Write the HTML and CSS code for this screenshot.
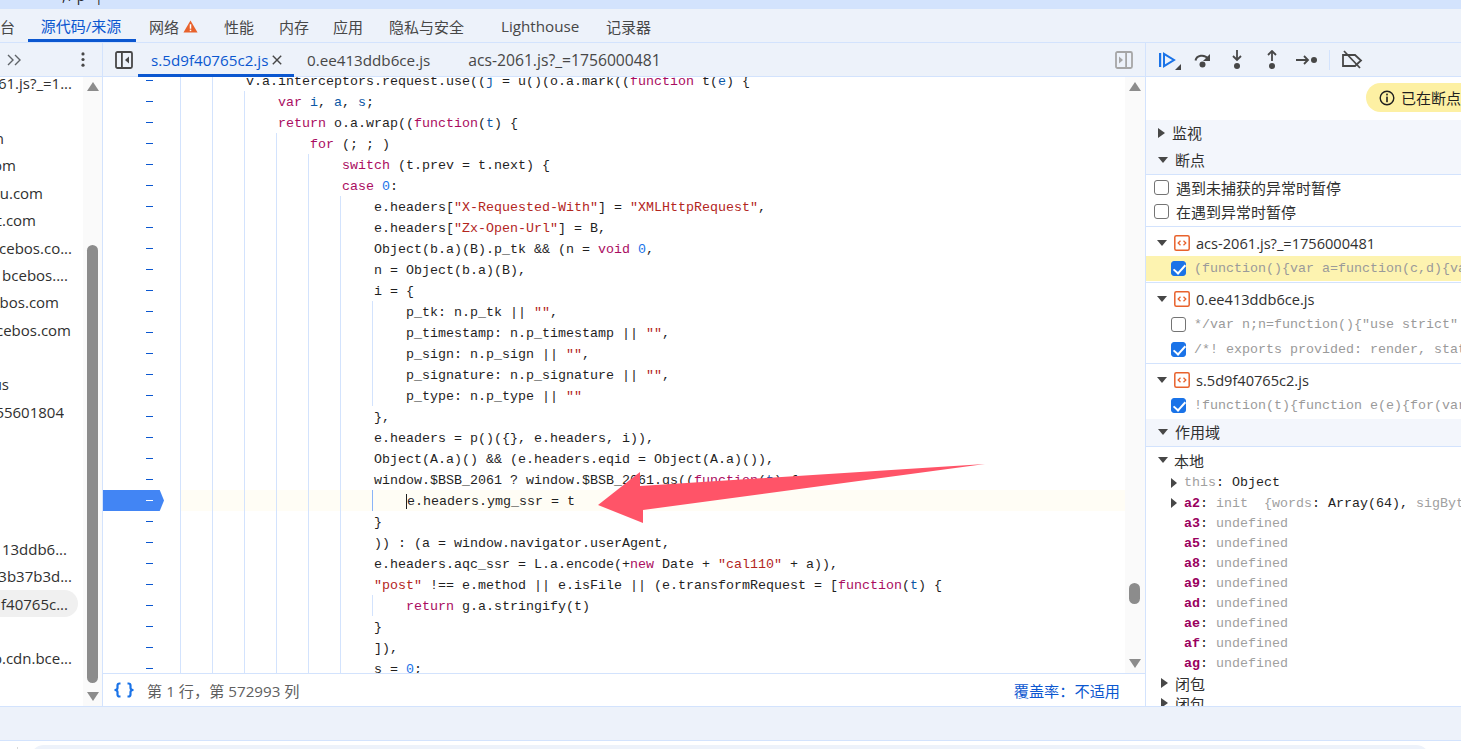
FILE: index.html
```html
<!DOCTYPE html>
<html lang="zh-CN">
<head>
<meta charset="utf-8">
<title>DevTools</title>
<link rel="stylesheet" href="styles.css">
</head>
<body>
<div class="app">
  <div class="topstrip"><span class="frag">,/p |</span></div>
  <nav class="maintabs">
    <span class="mt mt-cut">台</span>
    <span class="mt mt-active">源代码/来源</span>
    <span class="mt mt-net">网络<svg class="warn" viewBox="0 0 16 14"><path d="M8 .5 15.6 13.5H.4z" fill="#e8622c"/><rect x="7.2" y="4.6" width="1.6" height="4.8" fill="#fff"/><rect x="7.2" y="10.4" width="1.6" height="1.6" fill="#fff"/></svg></span>
    <span class="mt mt-perf">性能</span>
    <span class="mt mt-mem">内存</span>
    <span class="mt mt-app">应用</span>
    <span class="mt mt-sec">隐私与安全</span>
    <span class="mt mt-lh">Lighthouse</span>
    <span class="mt mt-rec">记录器</span>
  </nav>
  <div class="workspace">
    <aside class="navpane">
      <div class="navbar">
        <svg class="i-more" viewBox="0 0 16 12"><path d="M1 1l5 5-5 5M8 1l5 5-5 5" fill="none" stroke="#5f6368" stroke-width="1.4"/></svg>
        <svg class="i-kebab" viewBox="0 0 4 16"><circle cx="2" cy="2" r="1.7" fill="#474747"/><circle cx="2" cy="8" r="1.7" fill="#474747"/><circle cx="2" cy="14" r="1.7" fill="#474747"/></svg>
      </div>
      <div class="navbody">
        <div class="tree">
          <div class="row"><span style="width:72px">61.js?_=1...</span></div>
          <div class="row"></div>
          <div class="row"><span style="width:4px">n</span></div>
          <div class="row"><span style="width:16px">om</span></div>
          <div class="row"><span style="width:43px">u.com</span></div>
          <div class="row"><span style="width:36px">t.com</span></div>
          <div class="row"><span style="width:72px">cebos.co...</span></div>
          <div class="row"><span style="width:68px">bcebos....</span></div>
          <div class="row"><span style="width:59px">bos.com</span></div>
          <div class="row"><span style="width:71px">cebos.com</span></div>
          <div class="row"></div>
          <div class="row"><span style="width:9px">us</span></div>
          <div class="row"><span style="width:64px">55601804</span></div>
          <div class="row"></div>
          <div class="row"></div>
          <div class="row"></div>
          <div class="row"></div>
          <div class="row"><span style="width:67px">13ddb6...</span></div>
          <div class="row"><span style="width:72px">3b37b3d...</span></div>
          <div class="row row-sel"><span style="width:68px">f40765c...</span></div>
          <div class="row"></div>
          <div class="row"><span style="width:72px">o.cdn.bce...</span></div>
        </div>
        <div class="vscroll nav-scroll">
          <i class="arr-up"></i>
          <i class="thumb nav-thumb"></i>
          <i class="arr-down"></i>
        </div>
      </div>
    </aside>
    <main class="editor">
      <div class="edbar">
        <svg class="i-side" viewBox="0 0 18 18"><rect x="1" y="1" width="16" height="16" rx="1.5" fill="none" stroke="#474747" stroke-width="1.8"/><rect x="6" y="1" width="1.8" height="16" fill="#474747"/><path d="M14 5.500v7L10 9z" fill="#474747"/></svg>
        <span class="ft ft-active">s.5d9f40765c2.js<svg class="i-x" viewBox="0 0 10 10"><path d="M.8.8l8.4 8.4M9.2.8.8 9.2" stroke="#474747" stroke-width="1.4"/></svg></span>
        <span class="ft ft-2">0.ee413ddb6ce.js</span>
        <span class="ft ft-3">acs-2061.js?_=1756000481</span>
        <svg class="i-side2" viewBox="0 0 18 18"><rect x="1" y="1" width="16" height="16" rx="1.5" fill="none" stroke="#a6a6a6" stroke-width="1.8"/><rect x="10.2" y="1" width="1.8" height="16" fill="#a6a6a6"/><path d="M4 5.500v7L8 9z" fill="#a6a6a6"/></svg>
      </div>
      <div class="edbody">
        <div class="code" id="code"></div>
        <div class="vscroll ed-scroll">
          <i class="arr-up"></i>
          <i class="thumb ed-thumb"></i>
          <i class="arr-down"></i>
        </div>
        <svg class="redarrow" viewBox="0 0 420 70"><path d="M3 44 45 11 45 25 390 3 48 49 48 62z" fill="#ff5468"/></svg>
      </div>
      <div class="status">
        <svg class="i-braces" viewBox="0 0 22 16"><path d="M7.500 1.500H6.500C5 1.500 4.500 2.200 4.500 3.500V6C4.500 7 3.500 8 1.500 8 3.500 8 4.500 9 4.500 10V12.500C4.500 13.800 5 14.500 6.500 14.500H7.500M14.500 1.500H15.500C17 1.500 17.500 2.200 17.500 3.500V6C17.500 7 18.500 8 20.500 8 18.500 8 17.500 9 17.500 10V12.500C17.500 13.800 17 14.500 15.500 14.500H14.500" fill="none" stroke="#1a73e8" stroke-width="2.200"/></svg>
        <span class="pos">第 1 行，第 572993 列</span>
        <span class="cov">覆盖率：不适用</span>
      </div>
    </main>
    <aside class="debug">
      <div class="dbar">
        <svg class="di i-resume" viewBox="0 0 24 20"><rect x="2" y="3" width="2.200" height="14" fill="#1a73e8"/><path d="M7 3.800 17 10 7 16.200z" fill="none" stroke="#1a73e8" stroke-width="2"/><path d="M24 14v6h-6z" fill="#474747"/></svg>
        <svg class="di i-over" viewBox="0 0 20 20"><path d="M2.500 10.500C3.500 5.500 11 3.500 15.500 9" fill="none" stroke="#474747" stroke-width="2"/><path d="M17 4v7h-7z" fill="#474747"/><circle cx="9.500" cy="14.500" r="3" fill="#474747"/></svg>
        <svg class="di i-into" viewBox="0 0 20 20"><path d="M10 0v9" stroke="#474747" stroke-width="1.800"/><path d="M6 6l4 4 4-4" fill="none" stroke="#474747" stroke-width="1.800"/><circle cx="10" cy="16" r="3" fill="#474747"/></svg>
        <svg class="di i-out" viewBox="0 0 20 20"><path d="M10 11V1" stroke="#474747" stroke-width="1.800"/><path d="M6 5l4-4 4 4" fill="none" stroke="#474747" stroke-width="1.800"/><circle cx="10" cy="16" r="3" fill="#474747"/></svg>
        <svg class="di i-step" viewBox="0 0 24 20"><path d="M1 10h12M9 6l4 4-4 4" fill="none" stroke="#474747" stroke-width="1.800"/><circle cx="19" cy="10" r="3" fill="#474747"/></svg>
        <span class="dsep"></span>
        <svg class="di i-deact" viewBox="0 0 22 20"><path d="M2 5h12l6 5.500-6 5.500H2z" fill="none" stroke="#474747" stroke-width="1.800"/><path d="M3 1l16 17" stroke="#474747" stroke-width="1.800"/></svg>
      </div>
      <div class="dbody">
        <div class="pillrow"><div class="pill"><svg class="i-info" viewBox="0 0 16 16"><circle cx="8" cy="8" r="6.800" fill="none" stroke="#1f1f1f" stroke-width="1.400"/><rect x="7.200" y="3.600" width="1.600" height="1.800" fill="#1f1f1f"/><rect x="7.200" y="6.600" width="1.600" height="5.600" fill="#1f1f1f"/></svg>已在断点处暂停</div></div>
        <div class="shead"><i class="tri-r"></i>监视</div>
        <div class="shead shead-line"><i class="tri-d"></i>断点</div>
        <div class="checks">
          <label class="chk"><i class="box"></i>遇到未捕获的异常时暂停</label>
          <label class="chk"><i class="box"></i>在遇到异常时暂停</label>
        </div>
        <div class="bgroup">
          <div class="bfile"><i class="tri-d"></i><svg class="i-file" viewBox="0 0 16 16"><rect x=".8" y=".8" width="14.400" height="14.400" rx="1.500" fill="#fff" stroke="#e8622c" stroke-width="1.500"/><path d="M6.500 5.800 4.200 8l2.300 2.200M9.500 5.800 11.800 8 9.500 10.200" fill="none" stroke="#e8622c" stroke-width="1.300"/></svg>acs-2061.js?_=1756000481</div>
          <div class="bline bline-hit"><i class="box box-on"></i><code>(function(){var a=function(c,d){var b=</code></div>
        </div>
        <div class="bgroup">
          <div class="bfile"><i class="tri-d"></i><svg class="i-file" viewBox="0 0 16 16"><rect x=".8" y=".8" width="14.400" height="14.400" rx="1.500" fill="#fff" stroke="#e8622c" stroke-width="1.500"/><path d="M6.500 5.800 4.200 8l2.300 2.200M9.500 5.800 11.800 8 9.500 10.200" fill="none" stroke="#e8622c" stroke-width="1.300"/></svg>0.ee413ddb6ce.js</div>
          <div class="bline"><i class="box"></i><code>*/var n;n=function(){"use strict"</code></div>
          <div class="bline"><i class="box box-on"></i><code>/*! exports provided: render, static</code></div>
        </div>
        <div class="bgroup bgroup-last">
          <div class="bfile"><i class="tri-d"></i><svg class="i-file" viewBox="0 0 16 16"><rect x=".8" y=".8" width="14.400" height="14.400" rx="1.500" fill="#fff" stroke="#e8622c" stroke-width="1.500"/><path d="M6.500 5.800 4.200 8l2.300 2.200M9.500 5.800 11.800 8 9.500 10.200" fill="none" stroke="#e8622c" stroke-width="1.300"/></svg>s.5d9f40765c2.js</div>
          <div class="bline"><i class="box box-on"></i><code>!function(t){function e(e){for(var r</code></div>
        </div>
        <div class="shead shead-line"><i class="tri-d"></i>作用域</div>
        <div class="scope">
          <div class="sc-title"><i class="tri-d"></i>本地</div>
          <div class="var var-first"><i class="tri-r"></i><code><span class="dim">this</span>: Object</code></div>
          <div class="var"><i class="tri-r"></i><code><b>a2</b>: <span class="dim">init&nbsp; {words</span>: Array(64), <span class="dim">sigBytes</span></code></div>
          <div class="var var-in"><code><b>a3</b>: <span class="dim">undefined</span></code></div>
          <div class="var var-in"><code><b>a5</b>: <span class="dim">undefined</span></code></div>
          <div class="var var-in"><code><b>a8</b>: <span class="dim">undefined</span></code></div>
          <div class="var var-in"><code><b>a9</b>: <span class="dim">undefined</span></code></div>
          <div class="var var-in"><code><b>ad</b>: <span class="dim">undefined</span></code></div>
          <div class="var var-in"><code><b>ae</b>: <span class="dim">undefined</span></code></div>
          <div class="var var-in"><code><b>af</b>: <span class="dim">undefined</span></code></div>
          <div class="var var-in"><code><b>ag</b>: <span class="dim">undefined</span></code></div>
          <div class="sc-title sc-closure"><i class="tri-r"></i>闭包</div>
          <div class="sc-title sc-closure"><i class="tri-r"></i>闭包</div>
        </div>
      </div>
    </aside>
  </div>
  <div class="drawer"></div>
  <div class="footer"><span class="ftick"></span><div class="fpill"></div></div>
</div>
<script src="code.js"></script>
</body>
</html>
```
FILE: styles.css
```css
* { box-sizing: border-box; }
html, body { margin: 0; height: 100%; overflow: hidden; background: #fff; }
body { font-family: "Open Sans", "Noto Sans CJK SC", sans-serif; color: #474747; }
i { display: block; flex: none; }
code { font-family: "Liberation Mono", "DejaVu Sans Mono", monospace; }
.app { width: 1461px; height: 749px; display: flex; flex-direction: column; overflow: hidden; }

.topstrip { height: 9px; background: #d3e3fd; overflow: hidden; flex: none; }
.frag { display: block; margin: -12px 0 0 62px; font-size: 14px; line-height: 16px; letter-spacing: 3px; color: #1f1f1f; }

.maintabs { height: 34px; flex: none; background: #edf2fa; border-bottom: 1px solid #d3e3fd; display: flex; align-items: center; font-size: 15px; color: #474747; padding-top: 1px; }
.mt { display: flex; align-items: center; white-space: nowrap; }
.mt-cut { width: 28px; }
.mt-active { width: 108px; height: 32px; justify-content: center; color: #0b57d0; border-bottom: 3px solid #0b57d0; border-radius: 3px 3px 0 0; padding: 2px 2px 0 0; }
.mt-net { margin-left: 13px; width: 75px; }
.warn { width: 15px; height: 13px; margin-left: 4px; }
.mt-perf { width: 55px; }
.mt-mem { width: 54px; }
.mt-app { width: 56px; }
.mt-sec { width: 112px; }
.mt-lh { width: 105px; font-size: 15.2px; }

.workspace { height: 663px; flex: none; display: flex; }
.navpane { width: 103px; flex: none; border-right: 1px solid #d3e3fd; display: flex; flex-direction: column; }
.navbar { height: 34px; flex: none; background: #edf2fa; border-bottom: 1px solid #d3e3fd; display: flex; align-items: center; padding-left: 7px; }
.i-more { width: 16px; height: 12px; }
.i-kebab { width: 4px; height: 15px; margin-left: 58px; }
.navbody { flex: 1; display: flex; min-height: 0; }
.tree { width: 83px; flex: none; overflow: hidden; font-size: 15px; color: #303030; }
.row { height: 27.4px; display: flex; align-items: center; width: 78px; border-radius: 0 14px 14px 0; }
.row:first-child { margin-top: -7.5px; }
.row span { display: flex; justify-content: flex-end; overflow: hidden; white-space: nowrap; }
.row-sel { background: #f0f0f0; }

.vscroll { width: 19px; flex: none; background: #fafafa; position: relative; display: flex; flex-direction: column; align-items: center; }
.arr-up, .arr-down { position: absolute; width: 0; height: 0; border-left: 6px solid transparent; border-right: 6px solid transparent; }
.arr-up { top: 5px; border-bottom: 9px solid #8c8c8c; }
.arr-down { bottom: 5px; border-top: 9px solid #8c8c8c; }
.thumb { position: absolute; width: 11px; background: #8c8c8c; border-radius: 6px; }
.nav-thumb { top: 168px; height: 438px; }
.ed-thumb { top: 506px; height: 21px; }

.editor { width: 1043px; flex: none; display: flex; flex-direction: column; border-right: 1px solid #d3e3fd; }
.edbar { height: 34px; flex: none; background: #edf2fa; border-bottom: 1px solid #d3e3fd; display: flex; align-items: center; font-size: 15.2px; padding-left: 12px; }
.i-side { width: 18px; height: 18px; }
.ft { display: flex; align-items: center; white-space: nowrap; }
.ft-active { color: #0b57d0; height: 34px; width: 156px; margin-left: 5px; padding-left: 13px; border-bottom: 3px solid #0b57d0; border-radius: 3px 3px 0 0; padding-top: 3px; }
.i-x { width: 10px; height: 10px; margin-left: 4px; flex: none; }
.ft-2 { margin-left: 13px; padding-top: 1px; }
.ft-3 { margin-left: 38px; padding-top: 1px; font-size: 15.7px; }
.i-side2 { width: 18px; height: 18px; margin-left: auto; margin-right: 12px; }

.edbody { flex: 1; display: flex; min-height: 0; position: relative; overflow: hidden; }
.code { flex: 1; min-width: 0; overflow: hidden; font-family: "Liberation Mono", "DejaVu Sans Mono", monospace; font-size: 13.33px; color: #1f1f1f; }
.line { height: 21px; line-height: 21px; display: flex; white-space: pre; }
.line:first-child { margin-top: -7px; }
.gut { width: 61px; flex: none; display: flex; align-items: center; justify-content: flex-end; padding-right: 11px; }
.gut::after { content: ""; width: 7px; height: 1px; background: #0b57d0; }
.lpad { width: 16px; flex: none; }
.ind { width: 32px; flex: none; border-left: 1px solid #d3e3fd; }
.ind-cur { border-left-color: #8ab4f8; }
.txt { padding: 1px 0 0 2px; }
.line-bp { background: linear-gradient(to right, transparent 77px, #fffdf5 77px); }
.line-bp .gut { background: #4285f4; clip-path: polygon(0 0, 93% 0, 100% 50%, 93% 100%, 0 100%); }
.line-bp .gut::after { background: #fff; }
.caret { border-left: 1px solid #1f1f1f; }
.kw { color: #aa0d5f; }
.vr { color: #0b57a5; }
.st { color: #b3261e; }
.nm { color: #1a73e8; }

.ed-scroll { width: 20px; padding-right: 1px; }
.redarrow { position: absolute; left: 492px; top: 384px; width: 420px; height: 70px; pointer-events: none; }

.status { height: 33px; flex: none; border-top: 1px solid #d3e3fd; display: flex; align-items: center; font-size: 15.2px; color: #5f5f5f; padding-left: 10px; padding-right: 25px; }
.i-braces { width: 22px; height: 16px; flex: none; }
.pos { margin-left: 12px; }
.cov { margin-left: auto; color: #0b57d0; }

.debug { width: 315px; flex: none; display: flex; flex-direction: column; overflow: hidden; }
.dbar { height: 34px; flex: none; background: #edf2fa; border-bottom: 1px solid #d3e3fd; display: flex; align-items: center; padding-left: 11px; }
.di { flex: none; width: 20px; height: 20px; }
.i-resume { width: 24px; }
.i-over { margin-left: 12px; }
.i-into { margin-left: 14px; }
.i-out { margin-left: 15px; }
.i-step { width: 24px; margin-left: 13px; }
.dsep { width: 1px; height: 20px; background: #d3e3fd; margin-left: 10px; flex: none; }
.i-deact { width: 22px; margin-left: 11px; }

.dbody { flex: 1; min-height: 0; overflow: hidden; font-size: 15px; color: #303030; }
.pillrow { height: 43px; padding: 6px 0 0 220px; }
.pill { width: 300px; height: 29px; background: #fdf0a3; border-radius: 15px; display: flex; align-items: center; padding-left: 13px; color: #1f1f1f; white-space: nowrap; }
.i-info { width: 16px; height: 16px; margin-right: 6px; flex: none; }
.shead { height: 27px; background: #f3f6fc; display: flex; align-items: center; padding: 0 0 2px 12px; color: #303030; }
.shead-line { height: 28px; border-bottom: 1px solid #d3e3fd; }
.tri-r { width: 0; height: 0; border-top: 5px solid transparent; border-bottom: 5px solid transparent; border-left: 7px solid #474747; margin-right: 7px; }
.tri-d { width: 0; height: 0; border-left: 5px solid transparent; border-right: 5px solid transparent; border-top: 6px solid #474747; margin-right: 7px; }
.checks { height: 52px; border-bottom: 1px solid #d3e3fd; }
.chk { display: flex; align-items: center; height: 24px; padding-left: 8px; color: #303030; }
.box { width: 15px; height: 15px; border: 1.5px solid #747474; border-radius: 3px; margin-right: 7px; background: #fff; }
.box-on { background: #1a73e8; border-color: #1a73e8; position: relative; }
.box-on::after { content: ""; position: absolute; left: 3.5px; top: 0; width: 5px; height: 10px; border: solid #fff; border-width: 0 2px 2px 0; transform: rotate(42deg); }
.bgroup { border-bottom: 1px solid #d3e3fd; padding: 1px 0 1px; }
.bgroup-last { border-bottom: 0; }
.bfile { height: 28px; display: flex; align-items: center; padding-left: 11px; white-space: nowrap; padding-top: 2px; font-size: 14.6px; }
.bfile .i-file { margin-right: 6px; }
.i-file { width: 16px; height: 16px; flex: none; }
.bline { height: 25px; display: flex; align-items: center; padding-left: 25px; white-space: nowrap; color: #9a9a9a; font-size: 13.33px; }
.bline .box { margin-right: 8px; }
.bline-hit { background: #fdf3b0; }
.scope { padding-top: 2px; }
.sc-title { height: 22px; display: flex; align-items: center; padding-left: 12px; color: #303030; }
.sc-title .tri-d { margin-right: 6px; }
.sc-closure { padding-left: 15px; height: 20px; }
.sc-closure .tri-r { margin-right: 7px; }
.var { height: 20px; display: flex; align-items: center; padding-left: 25px; white-space: nowrap; font-size: 13.33px; color: #1f1f1f; }
.var .tri-r { border-left-width: 6px; margin-right: 7px; }
.var-in { padding-left: 38px; }
.var-first { height: 22px; padding-top: 1px; }
.var b { color: #99005e; }
.dim { color: #a0a0a0; }

.drawer { height: 35px; flex: none; background: #edf2fa; border-top: 1px solid #d3e3fd; border-bottom: 1px solid #d3e3fd; }
.footer { height: 8px; flex: none; padding: 4px 31px 0 30px; position: relative; overflow: hidden; }
.fpill { height: 30px; background: #edf2fa; border-radius: 14px; }
.ftick { position: absolute; left: 17px; top: 6px; width: 1px; height: 10px; background: #d9d9d9; }
```
FILE: code.js
```js
var K = function (s) { return '<span class="kw">' + s + '</span>'; };
var V = function (s) { return '<span class="vr">' + s + '</span>'; };
var S = function (s) { return '<span class="st">' + s + '</span>'; };
var N = function (s) { return '<span class="nm">' + s + '</span>'; };
var lines = [
  [2, 'v.a.interceptors.request.use((' + V('j') + ' = u()(o.a.mark((' + K('function') + ' t(' + V('e') + ') {'],
  [3, K('var') + ' ' + V('i') + ', ' + V('a') + ', ' + V('s') + ';'],
  [3, K('return') + ' o.a.wrap((' + K('function') + '(' + V('t') + ') {'],
  [4, K('for') + ' (; ; )'],
  [5, K('switch') + ' (t.prev = t.next) {'],
  [5, K('case') + ' ' + N('0') + ':'],
  [6, 'e.headers[' + S('"X-Requested-With"') + '] = ' + S('"XMLHttpRequest"') + ','],
  [6, 'e.headers[' + S('"Zx-Open-Url"') + '] = B,'],
  [6, 'Object(b.a)(B).p_tk &amp;&amp; (n = ' + K('void') + ' ' + N('0') + ','],
  [6, 'n = Object(b.a)(B),'],
  [6, 'i = {'],
  [7, 'p_tk: n.p_tk || ' + S('""') + ','],
  [7, 'p_timestamp: n.p_timestamp || ' + S('""') + ','],
  [7, 'p_sign: n.p_sign || ' + S('""') + ','],
  [7, 'p_signature: n.p_signature || ' + S('""') + ','],
  [7, 'p_type: n.p_type || ' + S('""')],
  [6, '},'],
  [6, 'e.headers = p()({}, e.headers, i)),'],
  [6, 'Object(A.a)() &amp;&amp; (e.headers.eqid = Object(A.a)()),'],
  [6, 'window.$BSB_2061 ? window.$BSB_2061.gs((' + K('function') + '(' + V('t') + ') {'],
  [7, '<span class="caret"></span>e.headers.ymg_ssr = t', 'bp'],
  [6, '}'],
  [6, ')) : (a = window.navigator.userAgent,'],
  [6, 'e.headers.aqc_ssr = L.a.encode(+' + K('new') + ' Date + ' + S('"cal110"') + ' + a)),'],
  [6, S('"post"') + ' !== e.method || e.isFile || (e.transformRequest = [' + K('function') + '(' + V('t') + ') {'],
  [7, K('return') + ' g.a.stringify(t)'],
  [6, '}'],
  [6, ']),'],
  [6, 's = ' + N('0') + ';']
];
document.getElementById('code').innerHTML = lines.map(function (l) {
  var ind = '';
  for (var n = 0; n < l[0]; n++) {
    ind += '<span class="ind' + (l[2] === 'bp' && n === 6 ? ' ind-cur' : '') + '"></span>';
  }
  return '<div class="line' + (l[2] === 'bp' ? ' line-bp' : '') + '"><span class="gut"></span><span class="lpad"></span>' + ind + '<span class="txt">' + l[1] + '</span></div>';
}).join('');
```
